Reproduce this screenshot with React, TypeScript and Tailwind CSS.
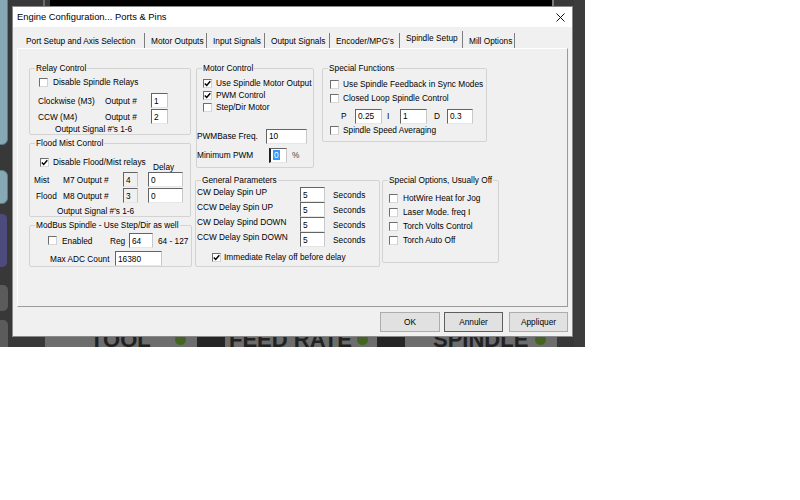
import type { ReactNode } from "react";

// ─── small win32-ish controls ────────────────────────────────────────────────
function Check({ checked = false }: { checked?: boolean }) {
  return (
    <span className="w-[9px] h-[9px] shrink-0 bg-white border border-[#6e6e6e] border-r-[#d0d0d0] border-b-[#d8d8d8] flex items-center justify-center">
      {checked && (
        <svg width="7" height="7" viewBox="0 0 7 7">
          <path d="M0.8 3.4 L2.7 5.4 L6.3 1.2" stroke="#000" strokeWidth="1.5" fill="none" />
        </svg>
      )}
    </span>
  );
}

function CheckRow({ label, checked, className = "" }: { label: string; checked?: boolean; className?: string }) {
  return (
    <div className={`flex items-center whitespace-nowrap ${className}`}>
      <Check checked={checked} />
      <span>{label}</span>
    </div>
  );
}

function Field({
  value,
  className = "",
  disabled = false,
}: {
  value: ReactNode;
  className?: string;
  disabled?: boolean;
}) {
  return (
    <div
      className={`h-[15px] shrink-0 flex items-center pl-[2px] border border-[#646464] border-r-[#c8c8c8] border-b-[#e6e6e6] ${
        disabled ? "bg-[#f0f0f0]" : "bg-white"
      } ${className}`}
    >
      {value}
    </div>
  );
}

function Group({ title, className = "", children }: { title: string; className?: string; children: ReactNode }) {
  return (
    <div className={`relative shrink-0 border border-[#d3d3d3] rounded-[2px] flex flex-col ${className}`}>
      <span className="absolute left-[5px] -top-[6px] px-[1px] bg-[#f0f0f0] leading-[10px] whitespace-nowrap">
        {title}
      </span>
      {children}
    </div>
  );
}

const TABS = [
  { label: "Port Setup and Axis Selection", w: "w-[125px]" },
  { label: "Motor Outputs", w: "w-[62px]" },
  { label: "Input Signals", w: "w-[58px]" },
  { label: "Output Signals", w: "w-[65px]" },
  { label: "Encoder/MPG's", w: "w-[70px]" },
  { label: "Spindle Setup", w: "w-[63px]", active: true },
  { label: "Mill Options", w: "w-[52px]" },
];

// ─── backdrop (the Mach3 screen behind the dialog) ───────────────────────────
function Backdrop() {
  return (
    <>
      <div className="absolute left-[50px] top-0 w-[502px] h-[6px] bg-black" />
      <div className="absolute left-[43px] top-0 w-[2px] h-[6px] bg-[#6a6a6a]" />
      <div className="absolute left-[552px] top-0 w-[2px] h-[6px] bg-[#7a7a7a]" />
      <div className="absolute left-[574px] top-0 w-[11px] h-[347px] bg-[#3c3c3c]" />
      <div className="absolute -left-[10px] -top-[10px] w-[18px] h-[155px] rounded-[6px] bg-[#86a9b5] border border-[#5d7c87]" />
      <div className="absolute -left-[10px] top-[170px] w-[18px] h-[34px] rounded-[6px] bg-[#86a9b5] border border-[#5d7c87]" />
      <div className="absolute -left-[10px] top-[213px] w-[18px] h-[55px] rounded-[6px] bg-[#4d4b7c] border border-[#34335a]" />
      <div className="absolute -left-[10px] top-[285px] w-[18px] h-[26px] rounded-[5px] bg-[#5b5b5b]" />
      <div className="absolute -left-[10px] top-[320px] w-[18px] h-[40px] rounded-[5px] bg-[#5b5b5b]" />

      <div className="absolute left-[45px] top-[322px] w-[152px] h-[30px] bg-[#6d6d6d] flex items-end pl-[45px] pb-[1px]">
        <span className="font-bold text-[22px] leading-none text-[#222]">TOOL</span>
      </div>
      <div className="absolute left-[175px] top-[334px] w-[11px] h-[11px] rounded-full bg-[#44641f]" />
      <div className="absolute left-[197px] top-[322px] w-[28px] h-[30px] bg-[#262626]" />
      <div className="absolute left-[225px] top-[322px] w-[152px] h-[30px] bg-[#6d6d6d] flex items-end pl-[4px] pb-[1px]">
        <span className="font-bold text-[22px] leading-none text-[#222]">FEED RATE</span>
      </div>
      <div className="absolute left-[357px] top-[334px] w-[11px] h-[11px] rounded-full bg-[#44641f]" />
      <div className="absolute left-[377px] top-[322px] w-[28px] h-[30px] bg-[#262626]" />
      <div className="absolute left-[405px] top-[322px] w-[152px] h-[30px] bg-[#6d6d6d] flex items-end pl-[28px] pb-[1px]">
        <span className="font-bold text-[22px] leading-none text-[#222]">SPINDLE</span>
      </div>
      <div className="absolute left-[535px] top-[334px] w-[11px] h-[11px] rounded-full bg-[#44641f]" />
    </>
  );
}

export default function App() {
  return (
    <div className="w-[800px] h-[500px] bg-white font-['Liberation_Sans',Arial,sans-serif] text-[8.3px] leading-[10px] text-black">
      <div className="relative w-[585px] h-[347px] bg-[#383838] overflow-hidden pl-[12px] pt-[6px]">
        <Backdrop />

        {/* dialog window */}
        <div className="relative w-[561px] h-[331px] bg-[#f0f0f0] border border-[#8a8a8a] flex flex-col">
          {/* title bar */}
          <div className="h-[20px] bg-white flex items-center justify-between pl-[4px] pr-[7px]">
            <span className="text-[9.4px]">Engine Configuration... Ports &amp; Pins</span>
            <svg width="9" height="9" viewBox="0 0 9 9">
              <path d="M0.5 0.5 L8.5 8.5 M8.5 0.5 L0.5 8.5" stroke="#111" strokeWidth="1" />
            </svg>
          </div>

          {/* tabs */}
          <div className="h-[21px] flex items-end pl-[7px]">
            {TABS.map((t) => (
              <div
                key={t.label}
                className={`${t.w} flex items-center pl-[6px] whitespace-nowrap border-r border-[#7d7d7d] ${
                  t.active ? "h-[17px] pb-[3px]" : "h-[15px]"
                }`}
              >
                {t.label}
              </div>
            ))}
          </div>

          {/* tab page */}
          <div className="ml-[4px] w-[551px] h-[259px] border border-t-white border-l-white border-r-[#9a9a9a] border-b-[#9a9a9a] flex pl-[11px] pt-[19px]">
            {/* left column */}
            <div className="w-[163px] flex flex-col">
              <Group title="Relay Control" className="w-[162px] h-[67px]">
                <CheckRow label="Disable Spindle Relays" className="mt-[7px] h-[12px] pl-[9px] gap-[5px]" />
                <div className="mt-[5px] h-[15px] flex items-center pl-[8px]">
                  <span className="w-[67px]">Clockwise (M3)</span>
                  <span className="w-[46px]">Output #</span>
                  <Field value="1" className="w-[17px]" />
                </div>
                <div className="mt-[1px] h-[15px] flex items-center pl-[8px]">
                  <span className="w-[67px]">CCW (M4)</span>
                  <span className="w-[46px]">Output #</span>
                  <Field value="2" className="w-[17px]" />
                </div>
                <div className="h-[10px] pl-[25px]">Output Signal #'s 1-6</div>
              </Group>

              <Group title="Flood Mist Control" className="mt-[8px] w-[162px] h-[74px]">
                <div className="mt-[11px] h-[17px] flex items-start">
                  <div className="w-[123px] mt-[2px] h-[10px] pl-[10px]">
                    <CheckRow label="Disable Flood/Mist relays" checked className="h-[10px] gap-[4px]" />
                  </div>
                  <span className="mt-[7px]">Delay</span>
                </div>
                <div className="h-[15px] flex items-center pl-[4px]">
                  <span className="w-[29px]">Mist</span>
                  <span className="w-[60px]">M7 Output #</span>
                  <Field value="4" disabled className="w-[15px]" />
                  <Field value="0" className="ml-[10px] w-[35px]" />
                </div>
                <div className="mt-[1px] h-[15px] flex items-center pl-[6px]">
                  <span className="w-[27px]">Flood</span>
                  <span className="w-[60px]">M8 Output #</span>
                  <Field value="3" disabled className="w-[15px]" />
                  <Field value="0" className="ml-[10px] w-[35px]" />
                </div>
                <div className="mt-[3px] h-[10px] pl-[27px]">Output Signal #'s 1-6</div>
              </Group>

              <Group title="ModBus Spindle - Use Step/Dir as well" className="mt-[8px] w-[163px] h-[42px]">
                <div className="mt-[7px] h-[15px] flex items-center pl-[18px]">
                  <Check />
                  <span className="ml-[5px] w-[48px]">Enabled</span>
                  <span className="w-[19px]">Reg</span>
                  <Field value="64" className="w-[24px]" />
                  <span className="ml-[5px] whitespace-nowrap">64 - 127</span>
                </div>
                <div className="mt-[3px] h-[15px] flex items-center pl-[20px]">
                  <span className="w-[65px]">Max ADC Count</span>
                  <Field value="16380" className="w-[47px]" />
                </div>
              </Group>
            </div>

            {/* right area */}
            <div className="ml-[4px] flex flex-col">
              <div className="flex items-start">
                <Group title="Motor Control" className="w-[118px] h-[100px]">
                  <div className="mt-[8px] flex flex-col pl-[6px]">
                    <CheckRow label="Use Spindle Motor Output" checked className="h-[12px] gap-[4px]" />
                    <CheckRow label="PWM Control" checked className="h-[12px] gap-[4px]" />
                    <CheckRow label="Step/Dir Motor" className="h-[12px] gap-[4px]" />
                  </div>
                  <div className="mt-[16px] h-[14px] flex items-center">
                    <span className="w-[69px] whitespace-nowrap">PWMBase Freq.</span>
                    <Field value="10" className="w-[41px] h-[14px]" />
                  </div>
                  <div className="mt-[5px] h-[14px] flex items-center">
                    <span className="w-[72px] whitespace-nowrap">Minimum PWM</span>
                    <Field
                      value={<span className="bg-[#3399ff] text-white px-[1px]">0</span>}
                      className="w-[18px] h-[14px] border-l-2 border-l-[#222]"
                    />
                    <span className="ml-[5px] text-[#444]">%</span>
                  </div>
                </Group>

                <Group title="Special Functions" className="ml-[8px] w-[165px] h-[74px]">
                  <div className="mt-[9px] h-[12px] w-full overflow-hidden pl-[7px]">
                    <CheckRow label="Use Spindle Feedback in Sync Modes" className="h-[12px] gap-[4px]" />
                  </div>
                  <CheckRow label="Closed Loop Spindle Control" className="mt-[2px] h-[12px] pl-[7px] gap-[4px]" />
                  <div className="mt-[5px] h-[14px] flex items-center pl-[18px]">
                    <span className="w-[14px]">P</span>
                    <Field value="0.25" className="w-[27px] h-[14px]" />
                    <span className="ml-[5px] w-[13px]">I</span>
                    <Field value="1" className="w-[27px] h-[14px]" />
                    <span className="ml-[7px] w-[13px]">D</span>
                    <Field value="0.3" className="w-[26px] h-[14px]" />
                  </div>
                  <CheckRow label="Spindle Speed Averaging" className="mt-[1px] h-[12px] pl-[7px] gap-[4px]" />
                </Group>
              </div>

              <div className="mt-[12px] -ml-[1px] flex items-start">
                <Group title="General Parameters" className="w-[185px] h-[87px]">
                  <div className="mt-[6px] flex flex-col">
                    {["CW Delay Spin UP", "CCW Delay Spin UP", "CW Delay Spind DOWN", "CCW Delay Spin DOWN"].map((l) => (
                      <div key={l} className="h-[15px] flex items-start pl-[1px]">
                        <span className="w-[103px] whitespace-nowrap">{l}</span>
                        <Field value="5" className="w-[25px]" />
                        <span className="ml-[8px] self-center">Seconds</span>
                      </div>
                    ))}
                  </div>
                  <CheckRow
                    label="Immediate Relay off before delay"
                    checked
                    className="mt-[4px] h-[12px] pl-[16px] gap-[3px]"
                  />
                </Group>

                <Group title="Special Options, Usually Off" className="ml-[2px] w-[117px] h-[83px]">
                  <div className="mt-[10px] flex flex-col pl-[6px]">
                    <CheckRow label="HotWire Heat for Jog" className="h-[14px] gap-[5px]" />
                    <CheckRow label="Laser Mode. freq I" className="h-[14px] gap-[5px]" />
                    <CheckRow label="Torch Volts Control" className="h-[14px] gap-[5px]" />
                    <CheckRow label="Torch Auto Off" className="h-[14px] gap-[5px]" />
                  </div>
                </Group>
              </div>
            </div>
          </div>

          {/* buttons */}
          <div className="mt-[5px] ml-[4px] w-[551px] h-[20px] flex justify-end">
            <button className="w-[60px] h-[20px] bg-[#e1e1e1] border border-[#adadad]">OK</button>
            <button className="ml-[4px] w-[59px] h-[20px] bg-[#e1e1e1] border border-[#5e5e5e]">Annuler</button>
            <button className="ml-[6px] w-[59px] h-[20px] bg-[#e1e1e1] border border-[#adadad]">Appliquer</button>
          </div>
        </div>
      </div>
    </div>
  );
}
